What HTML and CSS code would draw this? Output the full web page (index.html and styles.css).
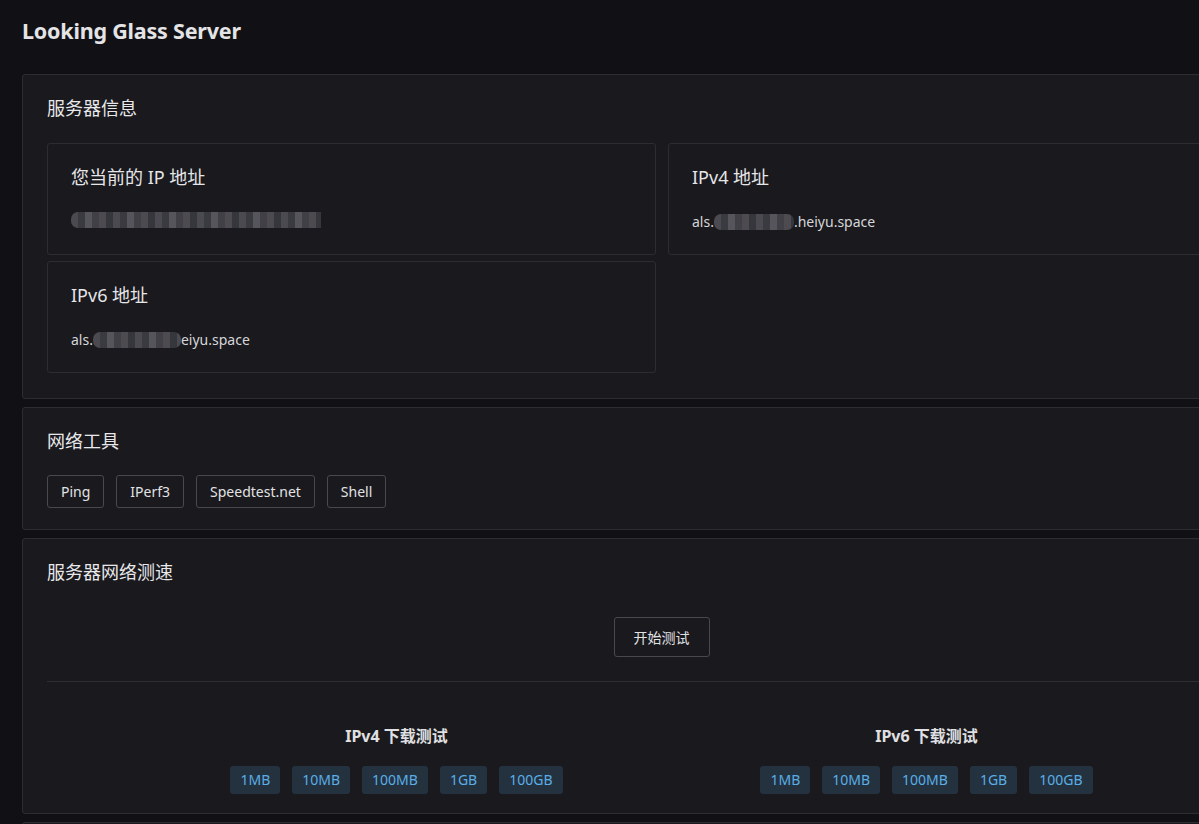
FILE: index.html
```html
<!DOCTYPE html>
<html lang="zh-CN">
<head>
<meta charset="utf-8">
<title>Looking Glass Server</title>
<link rel="stylesheet" href="styles.css">
</head>
<body>
<div class="page">
  <h1 class="title">Looking Glass Server</h1>

  <section class="card">
    <h2 class="card-title">服务器信息</h2>
    <div class="info-grid">
      <div class="info-cell">
        <h3 class="cell-title">您当前的 IP 地址</h3>
        <div class="cell-value"><span class="blur blur-ip"></span></div>
      </div>
      <div class="info-cell">
        <h3 class="cell-title">IPv4 地址</h3>
        <div class="cell-value">als.<span class="blur blur-v4"></span>.heiyu.space</div>
      </div>
      <div class="info-cell">
        <h3 class="cell-title">IPv6 地址</h3>
        <div class="cell-value">als.<span class="blur blur-v6"></span>eiyu.space</div>
      </div>
    </div>
  </section>

  <section class="card card-tools">
    <h2 class="card-title">网络工具</h2>
    <div class="tool-row">
      <button class="btn">Ping</button>
      <button class="btn">IPerf3</button>
      <button class="btn">Speedtest.net</button>
      <button class="btn">Shell</button>
    </div>
  </section>

  <section class="card card-speed">
    <h2 class="card-title">服务器网络测速</h2>
    <div class="start-row">
      <button class="btn btn-start">开始测试</button>
    </div>
    <hr class="divider">
    <div class="dl-row">
      <div class="dl-col">
        <h4 class="dl-title">IPv4 下载测试</h4>
        <div class="dl-buttons">
          <a class="dl-btn">1MB</a>
          <a class="dl-btn">10MB</a>
          <a class="dl-btn">100MB</a>
          <a class="dl-btn">1GB</a>
          <a class="dl-btn">100GB</a>
        </div>
      </div>
      <div class="dl-col">
        <h4 class="dl-title">IPv6 下载测试</h4>
        <div class="dl-buttons">
          <a class="dl-btn">1MB</a>
          <a class="dl-btn">10MB</a>
          <a class="dl-btn">100MB</a>
          <a class="dl-btn">1GB</a>
          <a class="dl-btn">100GB</a>
        </div>
      </div>
    </div>
  </section>

  <section class="card card-extra"></section>
</div>
</body>
</html>
```

FILE: styles.css
```css
* { box-sizing: border-box; }

html, body {
  margin: 0;
  padding: 0;
  background: #111115;
}

body {
  font-family: "Noto Sans", "Noto Sans CJK SC", sans-serif;
  color: #e2e2e4;
}

.page {
  width: 1323px;
  padding: 0 22px 40px;
}

.title {
  margin: 0;
  padding-top: 16px;
  height: 74px;
  font-size: 21.5px;
  line-height: 30px;
  font-weight: 700;
  color: #e4e4e6;
  letter-spacing: -0.2px;
}

.card {
  background: #19191e;
  border: 1px solid #2c2c31;
  border-radius: 3px;
  padding: 23px 24px 25px;
  margin-bottom: 8px;
}

.card-title {
  margin: 0;
  font-size: 18px;
  font-weight: 400;
  line-height: 20px;
  color: #e8e8ea;
}

.info-grid {
  margin-top: 25px;
  display: grid;
  grid-template-columns: 609px 609px;
  column-gap: 12px;
  row-gap: 6px;
}

.info-cell {
  height: 112px;
  border: 1px solid #2c2c31;
  border-radius: 3px;
  padding: 23px 23px 0;
}

.cell-title {
  margin: 0;
  font-size: 18px;
  font-weight: 400;
  line-height: 20px;
  color: #e6e6e8;
}

.cell-value {
  margin-top: 25px;
  font-size: 14px;
  line-height: 20px;
  color: #d6d6d8;
  display: flex;
  align-items: center;
}

.blur {
  display: inline-block;
  height: 16px;
  border-radius: 7px;
  background:
    repeating-linear-gradient(90deg,
      #4a4a50 0 7px, #3a3a41 7px 14px, #55555b 14px 21px, #404046 21px 28px, #4d4a50 28px 35px, #36363d 35px 42px);
}

.blur-ip { width: 250px; border-radius: 7px 0 0 7px; }
.blur-v4 { width: 80px; }
.blur-v6 { width: 88px; }

.tool-row {
  margin-top: 24px;
  display: flex;
  gap: 12px;
}

.btn {
  font-family: "Noto Sans", "Noto Sans CJK SC", sans-serif;
  font-size: 14px;
  color: #e2e2e4;
  background: transparent;
  border: 1px solid #48484e;
  border-radius: 3px;
  height: 33px;
  padding: 0 13px;
  cursor: pointer;
}

.card-tools { padding-bottom: 21px; }

.start-row {
  margin-top: 35px;
  display: flex;
  justify-content: center;
}

.btn-start {
  height: 40px;
  width: 96px;
  padding: 0;
}

.divider {
  margin: 24px 0 0;
  border: 0;
  border-top: 1px solid #2e2e33;
}

.dl-row {
  display: flex;
  justify-content: center;
  padding-top: 43px;
}

.dl-col {
  width: 530px;
  text-align: center;
}

.dl-title {
  margin: 0;
  font-size: 16px;
  font-weight: 700;
  line-height: 22px;
  color: #e0e0e2;
}

.dl-buttons {
  margin-top: 19px;
  display: flex;
  justify-content: center;
  gap: 12px;
}

.dl-btn {
  display: inline-block;
  height: 28px;
  line-height: 28px;
  padding: 0 10px;
  background: #243240;
  color: #5aaee6;
  font-size: 14px;
  border-radius: 3px;
}

.card-speed { padding-bottom: 19px; }

.card-extra { height: 120px; }
```
